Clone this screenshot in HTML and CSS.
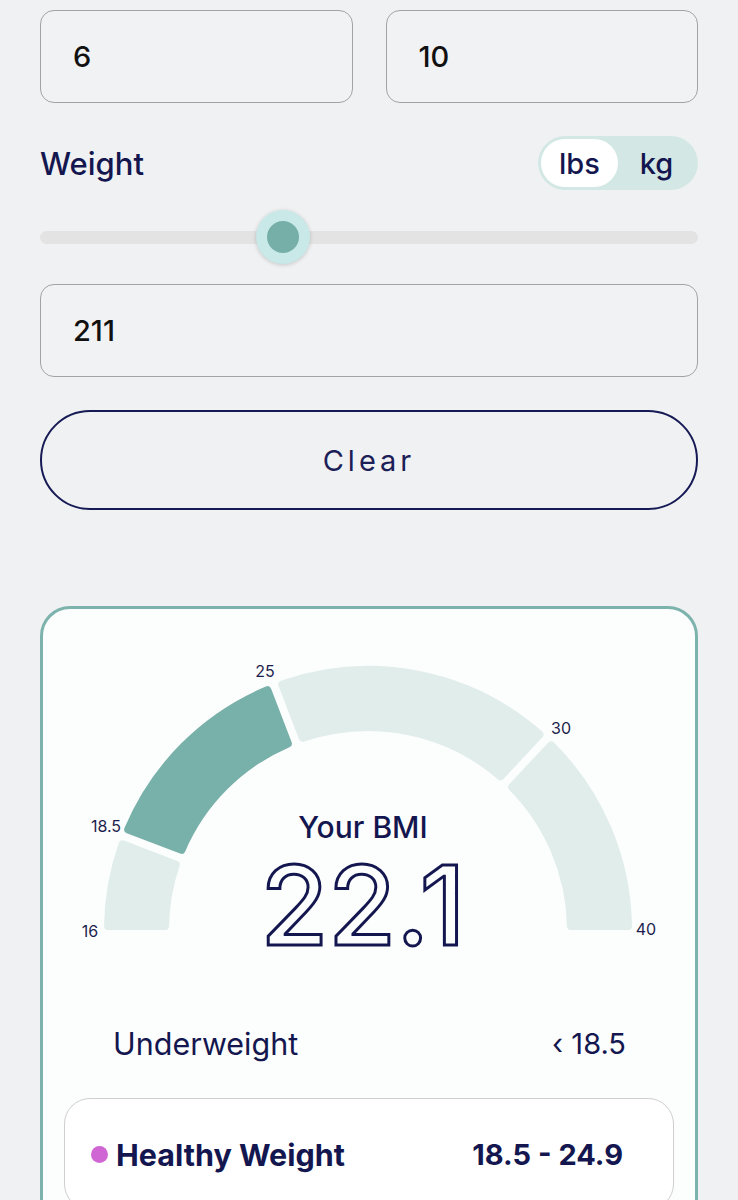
FILE: index.html
```html
<!DOCTYPE html>
<html lang="en">
<head>
    <meta charset="UTF-8">
    <meta name="viewport" content="width=device-width, initial-scale=1.0">
    <title>BMI Calculator</title>
    <link rel="stylesheet" href="styles.css">
</head>
<body>
    <div class="page">
        <div class="height-row">
            <div class="field">6</div>
            <div class="field">10</div>
        </div>

        <div class="weight-head">
            <div class="label">Weight</div>
            <div class="units">
                <span class="unit active">lbs</span>
                <span class="unit">kg</span>
            </div>
        </div>

        <div class="slider">
            <div class="track"></div>
            <div class="thumb" style="left: 37%"><span></span></div>
        </div>

        <div class="field">211</div>

        <button class="clear-button">Clear</button>

        <div class="card">
            <div class="gauge">
                <svg viewBox="0 0 651 340" width="651" height="340">
                    <g class="seg" stroke-width="8" stroke-linejoin="round">
                        <path class="light" d="M65.03 317 A260 260 0 0 1 79.52 235.32 L132.76 255.78 A203 203 0 0 0 122.04 317 Z"/>
                        <path class="dark" d="M85.24 220.42 A260 260 0 0 1 224.40 81.25 L244.83 134.50 A203 203 0 0 0 138.50 240.84 Z"/>
                        <path class="light" d="M239.32 75.52 A260 260 0 0 1 496.43 125.52 L457.51 167.21 A203 203 0 0 0 259.78 128.76 Z"/>
                        <path class="light" d="M508.08 136.38 A260 260 0 0 1 584.97 317.01 L527.96 317 A203 203 0 0 0 469.18 178.10 Z"/>
                    </g>
                    <g class="ticks">
                        <text x="47" y="322">16</text>
                        <text x="63" y="217">18.5</text>
                        <text x="222" y="62">25</text>
                        <text x="518" y="119">30</text>
                        <text x="603" y="320">40</text>
                    </g>
                </svg>
                <div class="reading">
                    <div class="reading-label">Your BMI</div>
                    <div class="reading-value">22.1</div>
                </div>
            </div>

            <div class="ranges">
                <div class="range">
                    <span class="name">Underweight</span>
                    <span>‹ 18.5</span>
                </div>
                <div class="range current">
                    <span class="name"><i class="dot"></i>Healthy Weight</span>
                    <span>18.5 - 24.9</span>
                </div>
            </div>
        </div>
    </div>
</body>
</html>
```

FILE: styles.css
```css
body {
    margin: 0;
    font-family: Inter, "Noto Sans", sans-serif;
    background: #f0f1f2;
    color: #14174f;
}

.page {
    padding: 10px 40px 0 40px;
}

.height-row {
    display: grid;
    grid-template-columns: 1fr 1fr;
    gap: 33px;
}

.field {
    height: 93px;
    box-sizing: border-box;
    border: 1.5px solid #a3a3a3;
    border-radius: 14px;
    background: #f1f2f3;
    display: flex;
    align-items: center;
    padding-left: 32px;
    font-size: 29px;
    font-weight: 500;
    color: #111;
}

.weight-head {
    margin-top: 33px;
    height: 54px;
    display: flex;
    justify-content: space-between;
    align-items: center;
}

.label {
    font-size: 31px;
    font-weight: 500;
}

.units {
    display: flex;
    align-items: center;
    height: 54px;
    box-sizing: border-box;
    padding: 3px;
    border-radius: 27px;
    background: #d3e8e4;
}

.unit {
    display: flex;
    align-items: center;
    justify-content: center;
    width: 77px;
    height: 48px;
    border-radius: 24px;
    font-size: 29px;
    font-weight: 500;
}

.unit.active {
    background: #fff;
}

.slider {
    position: relative;
    margin-top: 20px;
    height: 54px;
    display: flex;
    align-items: center;
}

.track {
    width: 100%;
    height: 13px;
    border-radius: 7px;
    background: #e3e3e3;
}

.thumb {
    position: absolute;
    top: 0;
    width: 54px;
    height: 54px;
    margin-left: -27px;
    border-radius: 50%;
    background: #c8e9e8;
    box-shadow: 0 1px 4px rgba(0, 0, 0, 0.18);
    display: flex;
    align-items: center;
    justify-content: center;
}

.thumb span {
    width: 32px;
    height: 32px;
    border-radius: 50%;
    background: #76aea8;
}

.slider + .field {
    margin-top: 20px;
}

.clear-button {
    display: block;
    width: 100%;
    height: 100px;
    margin-top: 33px;
    border: 2px solid #161a55;
    border-radius: 50px;
    background: transparent;
    font-family: Inter, "Noto Sans", sans-serif;
    font-size: 29px;
    letter-spacing: 4px;
    color: #1c2058;
}

.card {
    margin-top: 96px;
    border: 3px solid #7db3ad;
    border-radius: 30px;
    background: #fcfdfd;
    height: 640px;
}

.gauge {
    position: relative;
    height: 340px;
}

.gauge svg {
    display: block;
}

.seg .light {
    fill: #e0edeb;
    stroke: #e0edeb;
}

.seg .dark {
    fill: #78b0aa;
    stroke: #78b0aa;
}

.ticks text {
    font-family: Inter, "Noto Sans", sans-serif;
    font-size: 16px;
    fill: #1c1f4d;
    text-anchor: middle;
    dominant-baseline: central;
}

/* BMI value sits inside the arc */
.reading {
    position: absolute;
    left: 0;
    right: 0;
    top: 200px;
    display: flex;
    flex-direction: column;
    align-items: center;
    padding-right: 12px;
}

.reading-label {
    font-size: 30px;
    font-weight: 500;
    line-height: 36px;
}

.reading-value {
    font-size: 110px;
    font-weight: 500;
    line-height: 96px;
    margin-top: 12px;
    color: transparent;
    -webkit-text-stroke: 3px #14174f;
}

.ranges {
    padding: 0 21px;
    margin-top: 59px;
}

.range {
    display: flex;
    justify-content: space-between;
    align-items: center;
    height: 70px;
    padding: 0 48px 0 49px;
    font-size: 29px;
}

.range .name {
    font-size: 30.5px;
}

.range.current {
    margin-top: 20px;
    height: 110px;
    padding: 0 50px 0 26px;
    border: 1.5px solid #cfcfcf;
    border-radius: 26px;
    background: #fff;
    font-weight: 700;
}

.name {
    display: flex;
    align-items: center;
}

.dot {
    width: 17px;
    height: 17px;
    margin-right: 8px;
    border-radius: 50%;
    background: #d066d4;
}
```
